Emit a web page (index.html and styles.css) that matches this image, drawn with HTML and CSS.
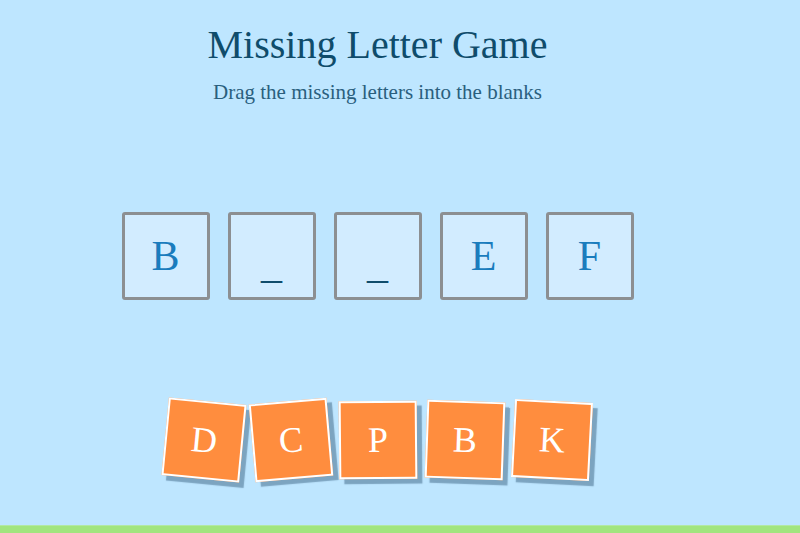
FILE: index.html
```html
<!DOCTYPE html>
<html lang="en">
<head>
<meta charset="utf-8">
<title>Missing Letter Game</title>
<link rel="stylesheet" href="styles.css">
</head>
<body>
<main class="game">
  <header class="intro">
    <h1 class="title">Missing Letter Game</h1>
    <p class="hint">Drag the missing letters into the blanks</p>
  </header>

  <section class="word">
    <div class="slot"><span class="letter">B</span></div>
    <div class="slot"><span class="blank">_</span></div>
    <div class="slot"><span class="blank">_</span></div>
    <div class="slot"><span class="letter">E</span></div>
    <div class="slot"><span class="letter">F</span></div>
  </section>

  <section class="pool">
    <div class="tile tilt-d">D</div>
    <div class="tile tilt-c">C</div>
    <div class="tile tilt-p">P</div>
    <div class="tile tilt-b">B</div>
    <div class="tile tilt-k">K</div>
  </section>
</main>
<footer class="ground"></footer>
</body>
</html>
```

FILE: styles.css
```css
html, body {
  margin: 0;
  padding: 0;
  height: 100%;
}

body {
  background: #bee6ff;
  font-family: "Liberation Serif", "Times New Roman", serif;
  display: flex;
  flex-direction: column;
  overflow: hidden;
}

.game {
  width: 755px;
  flex: 1;
  display: flex;
  flex-direction: column;
  align-items: center;
}

.intro {
  display: flex;
  flex-direction: column;
  align-items: center;
  padding-top: 23px;
}

.title {
  margin: 0;
  font-size: 40px;
  font-weight: normal;
  color: #0f4c6b;
  line-height: 44px;
}

.hint {
  margin: 13px 0 0;
  font-size: 21px;
  color: #2a5f7e;
  line-height: 24px;
}

.word {
  display: flex;
  gap: 18px;
  margin-top: 108px;
}

.slot {
  width: 82px;
  height: 82px;
  border: 3px solid #8c8f92;
  border-radius: 3px;
  background: #d2ecff;
  display: flex;
  align-items: center;
  justify-content: center;
}

.letter {
  font-size: 42px;
  color: #1a7cbd;
}

.blank {
  font-size: 42px;
  color: #0f4c6b;
  transform: translateY(8px);
}

.pool {
  display: flex;
  gap: 9px;
  margin-top: 101px;
}

.tile {
  width: 74px;
  height: 74px;
  border: 2px solid #ffffff;
  background: #ff8d3e;
  color: #ffffff;
  font-size: 36px;
  display: flex;
  align-items: center;
  justify-content: center;
  box-shadow: 5px 5px 1px rgba(70, 110, 140, 0.55);
}

.tilt-d { transform: rotate(5.5deg); }
.tilt-c { transform: rotate(-5deg); }
.tilt-p { transform: rotate(-0.5deg); }
.tilt-b { transform: rotate(2deg); }
.tilt-k { transform: rotate(3deg); }

.ground {
  height: 7px;
  background: #a1e57f;
  border-top: 1px solid #b3e8a4;
}
```
